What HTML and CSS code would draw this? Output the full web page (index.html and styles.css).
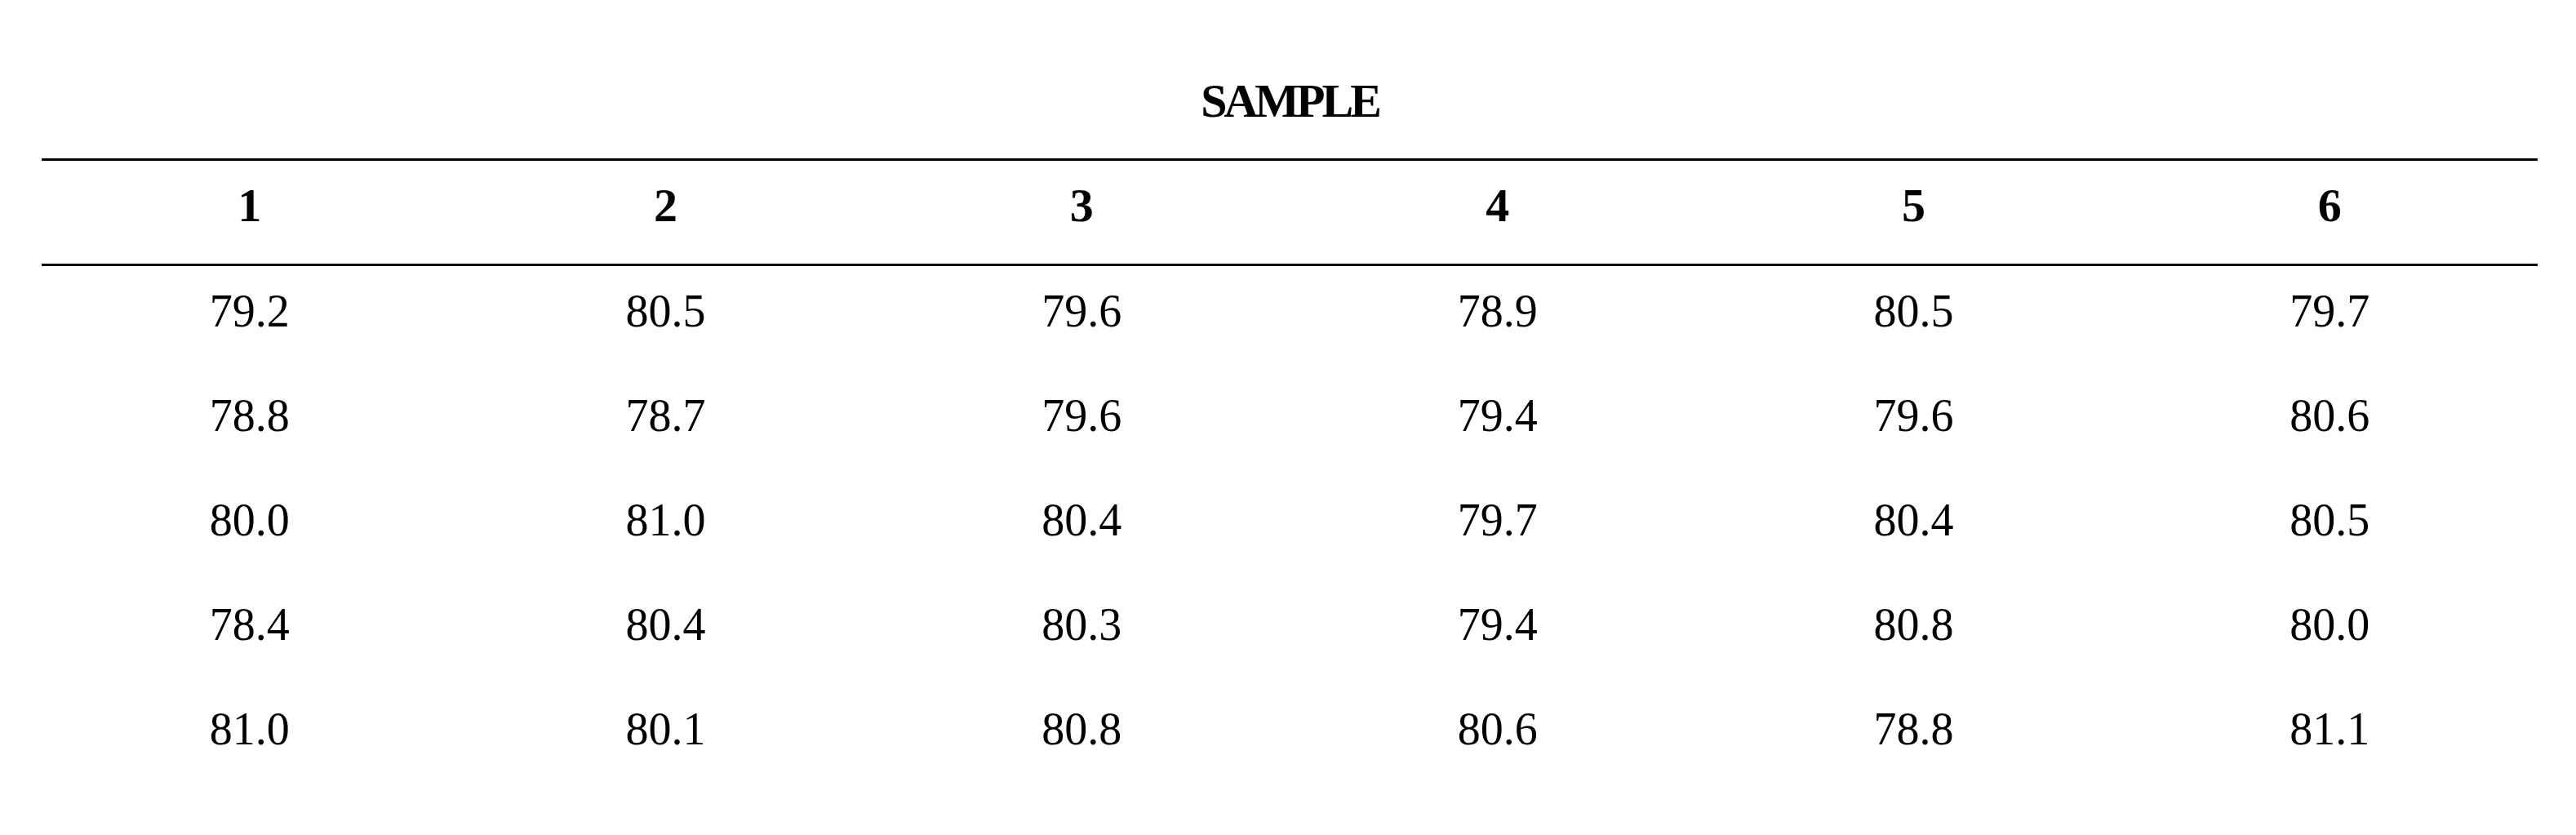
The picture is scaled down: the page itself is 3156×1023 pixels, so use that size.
FILE: index.html
```html
<!DOCTYPE html>
<html lang="en">
<head>
<meta charset="utf-8">
<title>Sample</title>
<link rel="stylesheet" href="styles.css">
</head>
<body>
<div class="page">
  <h1 class="title">SAMPLE</h1>
  <table class="data">
    <thead>
      <tr><th>1</th><th>2</th><th>3</th><th>4</th><th>5</th><th>6</th></tr>
    </thead>
    <tbody>
      <tr><td>79.2</td><td>80.5</td><td>79.6</td><td>78.9</td><td>80.5</td><td>79.7</td></tr>
      <tr><td>78.8</td><td>78.7</td><td>79.6</td><td>79.4</td><td>79.6</td><td>80.6</td></tr>
      <tr><td>80.0</td><td>81.0</td><td>80.4</td><td>79.7</td><td>80.4</td><td>80.5</td></tr>
      <tr><td>78.4</td><td>80.4</td><td>80.3</td><td>79.4</td><td>80.8</td><td>80.0</td></tr>
      <tr><td>81.0</td><td>80.1</td><td>80.8</td><td>80.6</td><td>78.8</td><td>81.1</td></tr>
    </tbody>
  </table>
</div>
</body>
</html>
```
FILE: styles.css
```css
html, body {
  margin: 0;
  padding: 0;
  background: #ffffff;
}

body {
  font-family: "Liberation Serif", "Times New Roman", serif;
  color: #000000;
}

.page {
  padding: 84px 47px 0 51px;
}

.title {
  margin: 0 0 30px;
  font-size: 58px;
  line-height: 80px;
  font-weight: bold;
  letter-spacing: -4px;
  text-align: center;
}

.data {
  width: 100%;
  table-layout: fixed;
  border-collapse: separate;
  border-spacing: 0;
}

.data th {
  font-size: 58px;
  font-weight: bold;
  line-height: 110px;
  padding: 0 0 16px;
  text-align: center;
  border-top: 3px solid #000000;
  border-bottom: 3px solid #000000;
}

.data td {
  font-size: 56px;
  font-weight: normal;
  line-height: 110px;
  padding: 0 0 18px;
  text-align: center;
}
```
